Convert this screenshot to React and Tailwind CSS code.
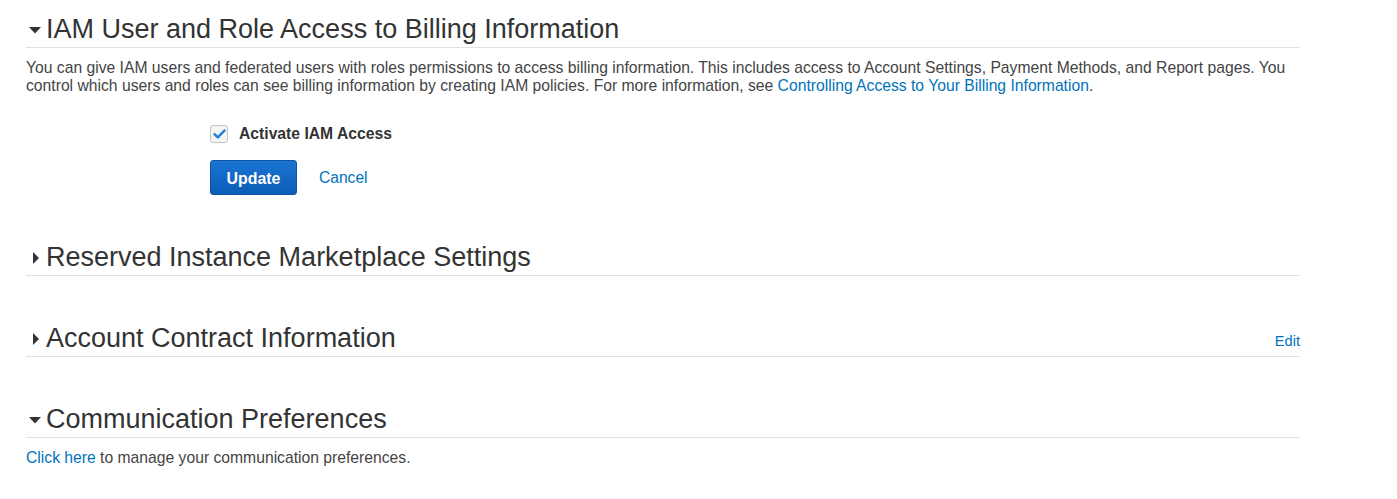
import { useState } from "react";

const font = { fontFamily: '"Liberation Sans", Arial, sans-serif' };

function Caret({ open }) {
  return open ? (
    <svg width="12" height="7" viewBox="0 0 12 7" className="ml-[3px] mr-[5px] mt-[2px] shrink-0">
      <polygon points="0,0 12,0 6,6.5" fill="#333" />
    </svg>
  ) : (
    <svg width="6" height="12" viewBox="0 0 6 12" className="ml-[7px] mr-[7px] mt-[2px] shrink-0">
      <polygon points="0,0 6,6 0,12" fill="#333" />
    </svg>
  );
}

function SectionHeader({ title, open, right }) {
  return (
    <div className="flex items-center border-b border-[#e1e1e1] h-[35px] pb-[2px]">
      <Caret open={open} />
      <h2 className="text-[27px] leading-[32px] text-[#333] font-normal">{title}</h2>
      {right && <div className="ml-auto self-end mb-[1px]">{right}</div>}
    </div>
  );
}

export default function App() {
  const [iamAccess, setIamAccess] = useState(true);

  return (
    <div style={font} className="bg-white w-[1397px] h-[499px] pl-[26px] pt-[13px] text-[15.7px] text-[#444]">
      <div className="w-[1274px]">
        {/* IAM ACCESS */}
        <SectionHeader title="IAM User and Role Access to Billing Information" open />
        <p className="mt-[11px] leading-[18px]">
          You can give IAM users and federated users with roles permissions to access billing information. This includes access to Account Settings, Payment Methods, and Report pages. You control which users and roles can see billing information by creating IAM policies. For more information, see{" "}
          <a href="#" className="text-[#0073bb]">Controlling Access to Your Billing Information</a>.
        </p>

        <div className="pl-[184px] mt-[30px]">
          <label className="flex items-center gap-[11px] cursor-pointer">
            <span
              onClick={() => setIamAccess(!iamAccess)}
              className="w-[18px] h-[18px] rounded-[3px] border border-[#c6c6c6] bg-[#f4f4f4] flex items-center justify-center"
            >
              {iamAccess && (
                <svg width="13" height="10" viewBox="0 0 13 10">
                  <path d="M1.5 5.2 L4.8 8.3 L11.5 1.5" fill="none" stroke="#1a7fd9" strokeWidth="2.4" strokeLinecap="round" strokeLinejoin="round" />
                </svg>
              )}
            </span>
            <span className="font-bold text-[#333] leading-[18px]">Activate IAM Access</span>
          </label>

          <div className="flex items-center mt-[17px]">
            <button className="w-[87px] h-[35px] pt-[2px] rounded-[3px] border border-[#0a55a6] bg-gradient-to-b from-[#1b74d2] to-[#0b5db7] text-white font-bold text-[15.9px]">
              Update
            </button>
            <a href="#" className="ml-[22px] pt-[1px] text-[#0073bb] text-[15.6px]">Cancel</a>
          </div>
        </div>

        {/* RESERVED INSTANCE */}
        <div className="mt-[46px]">
          <SectionHeader title="Reserved Instance Marketplace Settings" />
        </div>

        {/* ACCOUNT CONTRACT */}
        <div className="mt-[46px]">
          <SectionHeader
            title="Account Contract Information"
            right={<a href="#" className="text-[#0073bb] text-[14.6px]">Edit</a>}
          />
        </div>

        {/* COMMUNICATION PREFERENCES */}
        <div className="mt-[46px]">
          <SectionHeader title="Communication Preferences" open />
        </div>
        <p className="mt-[11px] leading-[18px]">
          <a href="#" className="text-[#0073bb]">Click here</a> to manage your communication preferences.
        </p>
      </div>
    </div>
  );
}
